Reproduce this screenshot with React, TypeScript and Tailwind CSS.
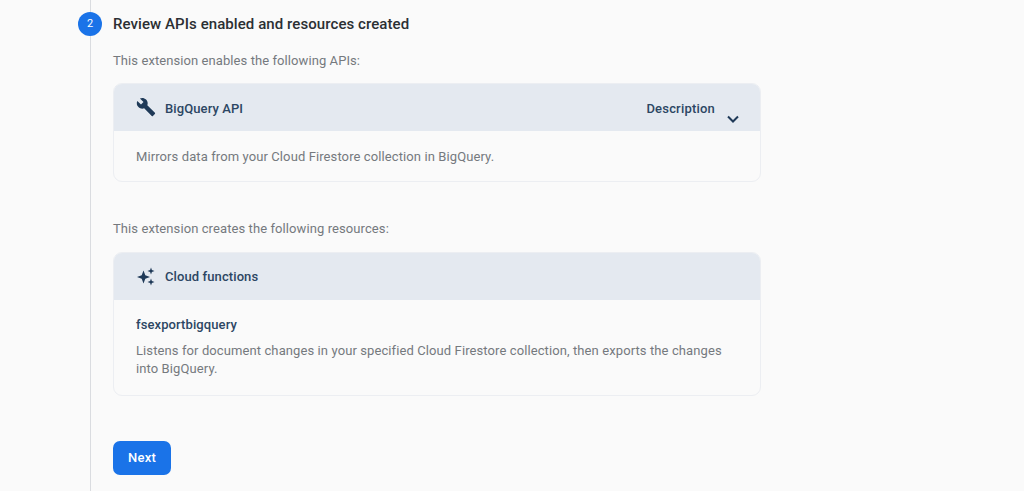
export default function App() {
  return (
    <div className="flex h-[491px] w-[1024px] overflow-hidden bg-[#fafafa] pl-[78px] font-['Roboto',sans-serif]">
      <div className="flex w-[24px] shrink-0 flex-col items-center">
        <div className="h-[12px] w-px bg-[#dadce0]" />
        <div className="flex h-[24px] w-[24px] shrink-0 items-center justify-center rounded-full bg-[#1a73e8] text-[11px] text-white">2</div>
        <div className="w-px flex-1 bg-[#dadce0]" />
      </div>
      <div className="ml-[11px] flex w-[648px] flex-col">
        <h2 className="mt-[14px] text-[15px] leading-[20px] font-medium tracking-[0.075px] text-[#2b2f33]">Review APIs enabled and resources created</h2>
        <p className="mt-[18px] text-[13px] leading-[18px] tracking-[0.08px] text-[#75797e]">This extension enables the following APIs:</p>
        <section className="mt-[13px] overflow-hidden rounded-[9px] border border-[#eceef2]">
          <div className="-mx-px -mt-px flex h-[48px] items-center bg-[#e4e9f0] pr-[22px] pl-[23px] text-[#2c4663]">
            <svg viewBox="0 0 24 24" className="h-[20px] w-[20px] fill-[#1f3a58]">
              <path d="M22.7 19l-9.1-9.1c.9-2.3.4-5-1.5-6.9-2-2-5-2.4-7.4-1.3L9 6 6 9 1.6 4.7C.4 7.1.9 10.1 2.9 12.1c1.9 1.9 4.6 2.4 6.9 1.5l9.1 9.1c.4.4 1 .4 1.4 0l2.3-2.3c.5-.4.5-1.1.1-1.4z" />
            </svg>
            <span className="mt-[4px] ml-[9px] text-[13px] font-medium tracking-[0.1px]">BigQuery API</span>
            <span className="mt-[4px] ml-auto text-[13px] font-medium tracking-[0.2px]">Description</span>
            <svg viewBox="0 0 12 8" className="mt-[24px] ml-[12px] h-[8px] w-[12px] fill-none stroke-[#1f3a58] stroke-2">
              <path d="M1 1.5l5 5 5-5" />
            </svg>
          </div>
          <p className="flex h-[50px] items-center pt-[2px] pl-[22px] text-[13px] tracking-[0.1px] text-[#75797e]">Mirrors data from your Cloud Firestore collection in BigQuery.</p>
        </section>
        <p className="mt-[38px] text-[13px] leading-[18px] tracking-[0.09px] text-[#75797e]">This extension creates the following resources:</p>
        <section className="mt-[14px] overflow-hidden rounded-[9px] border border-[#eceef2]">
          <div className="-mx-px -mt-px flex h-[48px] items-center bg-[#e4e9f0] pl-[23px] text-[#2c4663]">
            <svg viewBox="0 0 20 20" className="h-[20px] w-[20px] fill-[#1f3a58]">
              <path d="M7.5 4.5l1.8 4.7 4.7 1.8-4.7 1.8-1.8 4.7-1.8-4.7L1 11l4.7-1.8z" />
              <path d="M15 1.5l.9 2.6 2.6.9-2.6.9-.9 2.6-.9-2.6-2.6-.9 2.6-.9z" />
              <path d="M15 12.5l.9 2.6 2.6.9-2.6.9-.9 2.6-.9-2.6-2.6-.9 2.6-.9z" />
            </svg>
            <span className="mt-[2px] ml-[9px] text-[13px] font-medium tracking-[0.1px]">Cloud functions</span>
          </div>
          <div className="px-[22px] pt-[16px] pb-[16px]">
            <div className="text-[13px] leading-[18px] font-medium tracking-[0.1px] text-[#2c4663]">fsexportbigquery</div>
            <p className="mt-[8px] pb-[1px] text-[13px] leading-[18px] tracking-[0.1px] text-[#75797e]">Listens for document changes in your specified Cloud Firestore collection, then exports the changes into BigQuery.</p>
          </div>
        </section>
        <button className="mt-[45px] h-[34px] w-[58px] rounded-[7px] bg-[#1a73e8] text-[13px] font-medium tracking-[0.2px] text-white">Next</button>
      </div>
    </div>
  );
}
